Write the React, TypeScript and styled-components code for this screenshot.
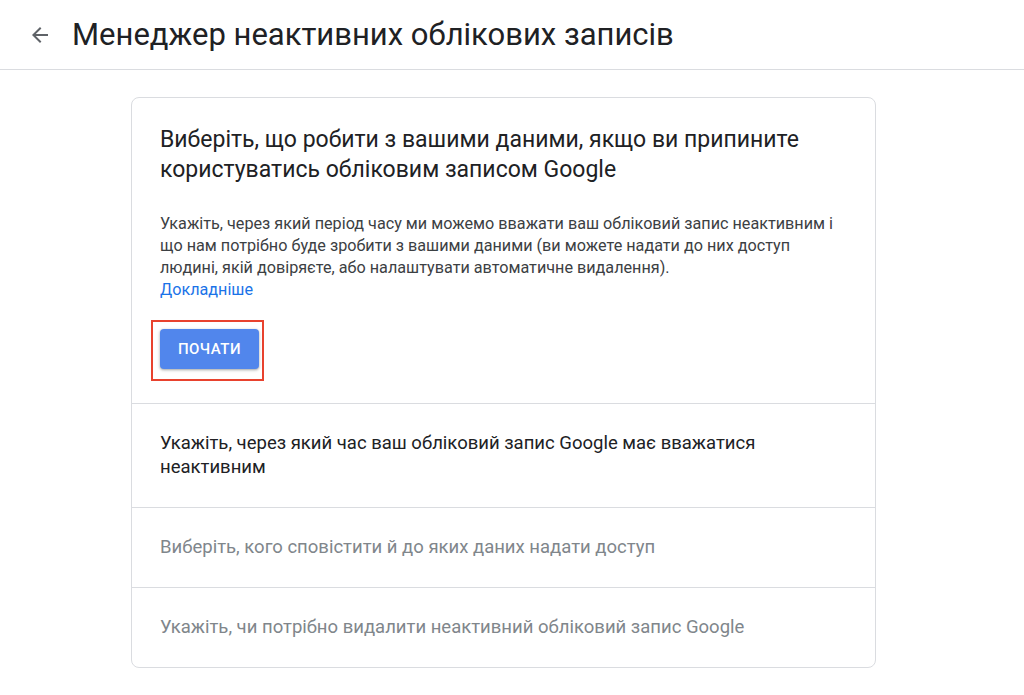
import React from "react";
import styled, { createGlobalStyle } from "styled-components";

const Global = createGlobalStyle`
  html, body { margin: 0; padding: 0; background: #ffffff; }
  body { font-family: Roboto, "Noto Sans", Arial, sans-serif; color: #202124; }
  * { box-sizing: border-box; }
`;

const Header = styled.header`
  display: flex;
  align-items: center;
  height: 70px;
  padding: 0 0 0 28px;
  border-bottom: 1px solid #dadce0;
`;

const BackButton = styled.button`
  display: flex;
  align-items: center;
  justify-content: center;
  width: 24px;
  height: 24px;
  padding: 0;
  margin-right: 20px;
  border: none;
  background: transparent;
  color: #5f6368;
  cursor: pointer;
`;

const Title = styled.h1`
  margin: 0;
  font-size: 31px;
  font-weight: 400;
  color: #202124;
`;

const Main = styled.main`
  display: flex;
  justify-content: center;
  padding: 27px 0 24px;
`;

const Card = styled.section`
  width: 745px;
  margin-right: 17px;
  border: 1px solid #dadce0;
  border-radius: 8px;
  background: #fff;
  overflow: hidden;
`;

const Intro = styled.div`
  padding: 27px 28px 34px;
  border-bottom: 1px solid #dadce0;
`;

const Heading = styled.h2`
  margin: 0 0 28px;
  font-size: 23px;
  line-height: 30px;
  font-weight: 400;
  color: #202124;
`;

const Body = styled.p`
  margin: 0 0 28px;
  font-size: 16.2px;
  line-height: 22px;
  color: #3c4043;
`;

const Link = styled.a`
  color: #1a73e8;
  text-decoration: none;
`;

const Highlight = styled.div`
  display: inline-block;
  margin: -9px 0 -12px -9px;
  padding: 7px 3px 10px 7px;
  border: 2px solid #e8422e;
`;

const PrimaryButton = styled.button`
  display: block;
  width: 99px;
  height: 40px;
  border: none;
  border-radius: 4px;
  background: #5186ec;
  color: #fff;
  font-family: Roboto, Arial, sans-serif;
  font-size: 15px;
  font-weight: 500;
  letter-spacing: 0.5px;
  box-shadow: 0 1px 2px rgba(60, 64, 67, 0.3), 0 1px 3px 1px rgba(60, 64, 67, 0.15);
  cursor: pointer;
`;

const Step = styled.div<{ $muted?: boolean; $last?: boolean }>`
  padding: 27px 28px 28px;
  border-bottom: ${(p) => (p.$last ? "none" : "1px solid #dadce0")};
  font-size: 18.5px;
  line-height: 24px;
  color: ${(p) => (p.$muted ? "#80868b" : "#202124")};
`;

const steps = [
  { text: "Укажіть, через який час ваш обліковий запис Google має вважатися неактивним", muted: false },
  { text: "Виберіть, кого сповістити й до яких даних надати доступ", muted: true },
  { text: "Укажіть, чи потрібно видалити неактивний обліковий запис Google", muted: true },
];

export default function App() {
  return (
    <>
      <Global />
      <Header>
        <BackButton aria-label="Назад">
          <svg width="24" height="24" viewBox="0 0 24 24" fill="currentColor">
            <path d="M20 11H7.83l5.59-5.59L12 4l-8 8 8 8 1.41-1.41L7.83 13H20v-2z" />
          </svg>
        </BackButton>
        <Title>Менеджер неактивних облікових записів</Title>
      </Header>
      <Main>
        <Card>
          <Intro>
            <Heading>
              Виберіть, що робити з вашими даними, якщо ви припините користуватись обліковим записом Google
            </Heading>
            <Body>
              Укажіть, через який період часу ми можемо вважати ваш обліковий запис неактивним і що нам потрібно
              буде зробити з вашими даними (ви можете надати до них доступ людині, якій довіряєте, або налаштувати
              автоматичне видалення).
              <br />
              <Link href="#">Докладніше</Link>
            </Body>
            <Highlight>
              <PrimaryButton>ПОЧАТИ</PrimaryButton>
            </Highlight>
          </Intro>
          {steps.map((s, i) => (
            <Step key={i} $muted={s.muted} $last={i === steps.length - 1}>
              {s.text}
            </Step>
          ))}
        </Card>
      </Main>
    </>
  );
}
